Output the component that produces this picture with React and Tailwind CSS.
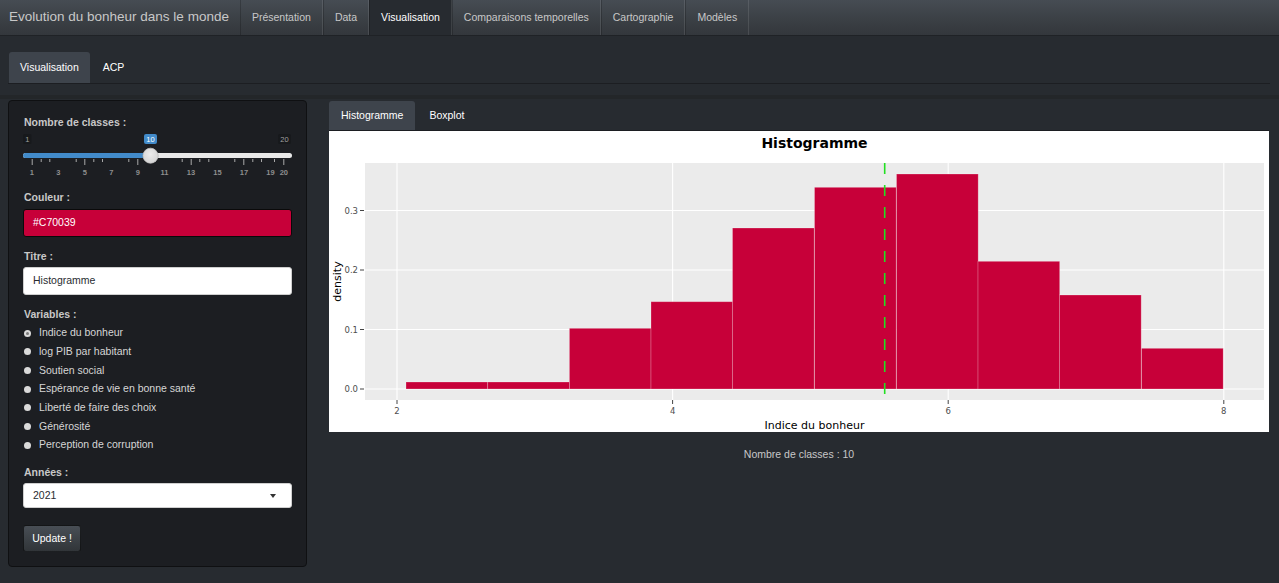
import React from "react";

const navItems = ["Présentation", "Data", "Visualisation", "Comparaisons temporelles", "Cartographie", "Modèles"];
const variables = [
  "Indice du bonheur",
  "log PIB par habitant",
  "Soutien social",
  "Espérance de vie en bonne santé",
  "Liberté de faire des choix",
  "Générosité",
  "Perception de corruption",
];

function Slider() {
  const majors = [8.7, 61.3, 114.3, 167.7, 220.3, 260.3];
  const minors = [40.7, 49.3, 75.7, 93.3, 102, 128.3, 146.3, 155, 181.7, 199.3, 208.3, 234.3, 252.3, 261, 274].map((x) => x - 23);
  const labels = [1, 3, 5, 7, 9, 11, 13, 15, 17, 19].map((v) => [v, 31.3 + (v - 1) * 13.26 - 23]);
  labels.push([20, 260.3]);
  return (
    <svg width="269" height="52" className="block" style={{ fontFamily: "'Liberation Sans', Arial, sans-serif" }}>
      <defs>
        <radialGradient id="hg" cx="50%" cy="40%" r="60%">
          <stop offset="0%" stopColor="#ececec" />
          <stop offset="100%" stopColor="#d4d4d4" />
        </radialGradient>
      </defs>
      <rect x="0" y="6" width="8.5" height="10" rx="1.5" fill="#17191c" />
      <text x="4.3" y="11" textAnchor="middle" dominantBaseline="central" fontSize="7.5" fill="#a0a0a0">1</text>
      <rect x="255" y="6" width="13" height="10" rx="1.5" fill="#17191c" />
      <text x="261.5" y="11" textAnchor="middle" dominantBaseline="central" fontSize="7.5" fill="#a0a0a0">20</text>
      <rect x="0" y="25" width="269" height="5" rx="2.5" fill="#e8e8e8" />
      <rect x="0" y="25" width="130" height="5" rx="2.5" fill="#428bca" />
      {majors.map((x, i) => (
        <rect key={"M" + i} x={x} y="31" width="1" height="6" fill="#a8a8a8" />
      ))}
      {minors.map((x, i) => (
        <rect key={"m" + i} x={x} y="31" width="1" height="3" fill="#a8a8a8" />
      ))}
      {labels.map(([v, x]) => (
        <text key={v} x={x + 0.5} y="44" textAnchor="middle" dominantBaseline="central" fontSize="7.5" fontWeight="bold" fill="#8f8f8f">
          {v}
        </text>
      ))}
      <rect x="121" y="6" width="13" height="10" rx="2" fill="#428bca" />
      <text x="127.5" y="11" textAnchor="middle" dominantBaseline="central" fontSize="7.5" fill="#ffffff">10</text>
      <circle cx="127.5" cy="28" r="8" fill="#000" opacity="0.25" />
      <circle cx="127.5" cy="27.7" r="7.5" fill="url(#hg)" stroke="#c9c9c9" strokeWidth="0.8" />
    </svg>
  );
}

function Plot() {
  const y0 = 258;
  const k = 595;
  const xs = (v) => 68 + (v - 2) * 137.8;
  const bars = [
    [77, 251],
    [158.7, 251],
    [240.4, 197.3],
    [322, 170.7],
    [403.5, 97],
    [485.5, 56.3],
    [567.5, 43],
    [649, 130.3],
    [730.5, 164],
    [812.5, 217.3],
  ];
  const w = 81.7;
  const yt = [0, 0.1, 0.2, 0.3];
  const xt = [2, 4, 6, 8];
  return (
    <svg width="940" height="301" className="block bg-white" style={{ fontFamily: "'DejaVu Sans', sans-serif" }}>
      <text x="485.5" y="12" textAnchor="middle" dominantBaseline="central" fontSize="14" fontWeight="bold" fill="#000">
        Histogramme
      </text>
      <rect x="36" y="32" width="899" height="237" fill="#ebebeb" />
      {yt.map((d) => (
        <line key={"gy" + d} x1="36" x2="935" y1={y0 - d * k} y2={y0 - d * k} stroke="#ffffff" strokeWidth="1.1" />
      ))}
      {xt.map((v) => (
        <line key={"gx" + v} x1={xs(v)} x2={xs(v)} y1="32" y2="269" stroke="#ffffff" strokeWidth="1.1" />
      ))}
      {bars.map(([x, top], i) => (
        <rect key={i} x={x} y={top} width={w} height={y0 - top} fill="#C70039" stroke="rgba(255,255,255,0.3)" strokeWidth="0.8" />
      ))}
      <line x1="555.7" x2="555.7" y1="32" y2="269" stroke="#22e022" strokeWidth="1.6" strokeDasharray="11 11" />
      {yt.map((d) => (
        <g key={"ty" + d}>
          <line x1="31" x2="35" y1={y0 - d * k} y2={y0 - d * k} stroke="#444" strokeWidth="1" />
          <text x="29" y={y0 - d * k} textAnchor="end" dominantBaseline="central" fontSize="8.5" fill="#4d4d4d">
            {d.toFixed(1)}
          </text>
        </g>
      ))}
      {xt.map((v) => (
        <g key={"tx" + v}>
          <line x1={xs(v)} x2={xs(v)} y1="269" y2="273" stroke="#444" strokeWidth="1" />
          <text x={xs(v)} y="280" textAnchor="middle" dominantBaseline="central" fontSize="8.5" fill="#4d4d4d">
            {v}
          </text>
        </g>
      ))}
      <text x="485.5" y="294" textAnchor="middle" dominantBaseline="central" fontSize="11" fill="#000">
        Indice du bonheur
      </text>
      <text x="8" y="150.5" textAnchor="middle" dominantBaseline="central" fontSize="11" fill="#000" transform="rotate(-90 8 150.5)">
        density
      </text>
    </svg>
  );
}

export default function App() {
  return (
    <div className="min-h-[583px] bg-[#272b30] text-[10.5px] text-[#c8c8c8] font-['Liberation_Sans',Arial,sans-serif]">
      {/* Navbar */}
      <div className="flex h-[36px] border-b border-[#1f2226] bg-linear-to-b from-[#464c53] via-[#3a3f44] via-60% to-[#33373c]">
        <div className="flex items-center pl-[9px] pr-[11px] text-[13.5px] text-[#c8c8c8]">Evolution du bonheur dans le monde</div>
        {navItems.map((n) => (
          <div
            key={n}
            className={
              n === "Visualisation"
                ? "flex items-center px-[11px] border-l border-r border-l-[rgba(0,0,0,0.2)] border-r-[rgba(255,255,255,0.1)] bg-[#272b30] text-white"
                : "flex items-center px-[11px] border-l border-r border-l-[rgba(0,0,0,0.2)] border-r-[rgba(255,255,255,0.1)] text-[#c8c8c8]"
            }
          >
            {n}
          </div>
        ))}
      </div>

      {/* Sub tabs */}
      <div className="mt-[16px] ml-[8px] mr-[9px] flex border-b border-[#1c1e22] pl-[1px]">
        <div className="flex h-[31px] items-center rounded-t-[3px] bg-[#3e444c] px-[11px] text-white">Visualisation</div>
        <div className="ml-[2px] flex h-[31px] items-center px-[11px] text-white">ACP</div>
      </div>

      <div className="mt-[11px] h-[4px] bg-[#232629]" />

      {/* Row */}
      <div className="mt-[1px] flex gap-[22px] pl-[8px] pr-[10px]">
        {/* Sidebar */}
        <div className="w-[299px] shrink-0 rounded-[4px] border border-[#0f1012] bg-[#1c1e22] px-[14px] pt-[15px] pb-[14px]">
          <div className="h-[12px] pl-[1px] font-bold leading-[12px]">Nombre de classes :</div>
          <Slider />
          <div className="mt-[11px] h-[12px] pl-[1px] font-bold leading-[12px]">Couleur :</div>
          <div className="mt-[6px] flex h-[28px] items-center rounded-[3px] border border-[#0a0a0a] bg-[#C70039] pl-[9px] text-white">#C70039</div>
          <div className="mt-[13px] h-[12px] pl-[1px] font-bold leading-[12px]">Titre :</div>
          <div className="mt-[5px] flex h-[28px] items-center rounded-[3px] border border-[#cfcfcf] bg-white pl-[9px] text-[#272b30]">Histogramme</div>
          <div className="mt-[13px] h-[12px] pl-[1px] font-bold leading-[12px]">Variables :</div>
          <div className="mt-[4px] flex flex-col">
            {variables.map((v, i) => (
              <div key={v} className="flex h-[18.67px] items-center">
                <div className="ml-[1px] flex h-[7px] w-[7px] items-center justify-center rounded-full bg-[#dadada]">
                  {i === 0 && <div className="h-[3px] w-[3px] rounded-full bg-[#7a7a7a]" />}
                </div>
                <span className="ml-[8px] text-[#d6d6d6]">{v}</span>
              </div>
            ))}
          </div>
          <div className="mt-[11.6px] h-[12px] pl-[1px] font-bold leading-[12px]">Années :</div>
          <div className="mt-[5px] flex h-[25px] items-center justify-between rounded-[3px] border border-[#cfcfcf] bg-white pl-[9px] pr-[15px] text-[#272b30]">
            <span>2021</span>
            <div className="h-0 w-0 border-x-[3.5px] border-t-[4px] border-x-transparent border-t-[#333]" />
          </div>
          <div className="mt-[16.7px] flex h-[27px] w-[58px] items-center justify-center rounded-[3px] border border-[rgba(0,0,0,0.6)] bg-linear-to-b from-[#484e55] via-[#3a3f44] via-60% to-[#313539] text-white">
            Update !
          </div>
        </div>

        {/* Main */}
        <div className="mt-[1px] flex-1">
          <div className="flex border-b border-[#1c1e22]">
            <div className="flex h-[29px] items-center rounded-t-[3px] bg-[#3e444c] px-[12px] text-white">Histogramme</div>
            <div className="ml-[2px] flex h-[29px] items-center px-[12px] text-white">Boxplot</div>
          </div>
          <Plot />
          <div className="mt-[16px] h-[12px] text-center leading-[12px] text-[#c8c8c8]">Nombre de classes : 10</div>
        </div>
      </div>
    </div>
  );
}
